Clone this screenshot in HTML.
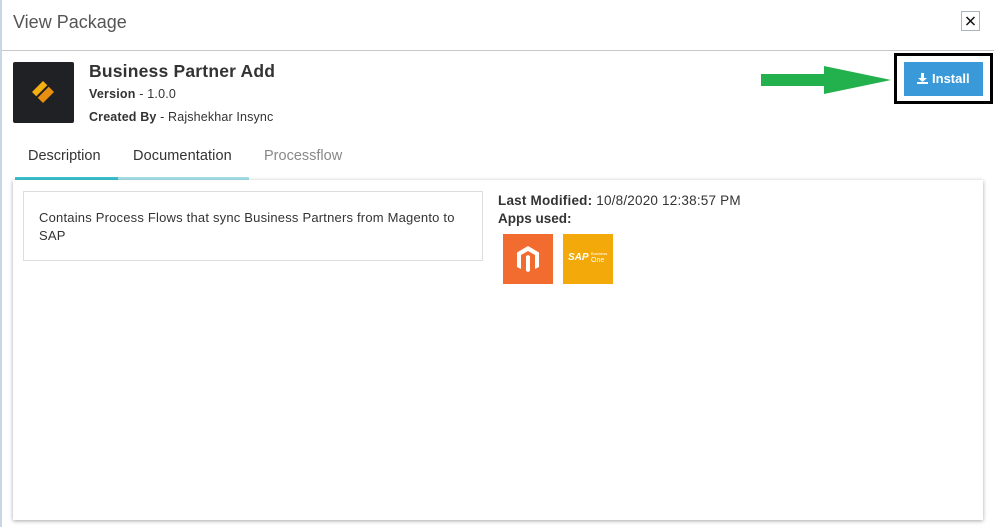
<!DOCTYPE html>
<html><head><style>
body{margin:0;width:994px;height:527px;background:#fff;font-family:"Liberation Sans",sans-serif;position:relative;overflow:hidden;color:#333}
.a{position:absolute;white-space:nowrap}
</style></head><body>
<div class="a" style="left:0;top:0;width:2px;height:527px;background:#c9d6e4"></div>
<div class="a" style="left:13px;top:12px;font-size:18px;color:#555">View Package</div>
<div class="a" style="left:961px;top:11px;width:19px;height:20px;border:1px solid #aab4be;box-sizing:border-box"><svg width="17" height="18"><path d="M4.5 5L12.5 13M12.5 5L4.5 13" stroke="#111" stroke-width="1.5"/></svg></div>
<div class="a" style="left:2px;top:50px;width:992px;height:1px;background:#c8c8c8"></div>
<div class="a" style="left:13px;top:62px;width:61px;height:61px;background:#1f2125;border-radius:2px">
<svg width="61" height="61"><path d="M32 21 L38 27 L27 38 L21 32Z" fill="#f3b00f" transform="translate(-2,-2)"/><path d="M32 21 L38 27 L27 38 L21 32Z" fill="#e88f10" transform="translate(3,3)"/><line x1="23" y1="36" x2="37" y2="22" stroke="#1f2125" stroke-width="2"/></svg></div>
<div class="a" style="left:89px;top:61px;font-size:17.5px;font-weight:bold;color:#333;letter-spacing:0.2px">Business Partner Add</div>
<div class="a" style="left:89px;top:87px;font-size:12.5px;letter-spacing:0.2px"><b>Version</b> - 1.0.0</div>
<div class="a" style="left:89px;top:110px;font-size:12.5px;letter-spacing:0.15px"><b>Created By</b> - Rajshekhar Insync</div>
<svg class="a" style="left:760px;top:64px" width="132" height="32"><rect x="1" y="10" width="65" height="12" fill="#22b14c"/><polygon points="64,2 131,16 64,30" fill="#22b14c"/></svg>
<div class="a" style="left:894px;top:53px;width:99px;height:51px;border:3px solid #000;box-sizing:border-box"></div>
<div class="a" style="left:904px;top:62px;width:79px;height:34px;background:#3a9ad9;color:#fff;font-size:13px;font-weight:bold;line-height:34px;text-align:center">
<svg width="11" height="11" style="vertical-align:-1px"><path d="M4 0h3v5h3l-4.5 4L1 5h3z M0 9h11v2H0z" fill="#fff"/></svg> Install</div>
<div class="a" style="left:28px;top:148px;font-size:14.5px;color:#333">Description</div>
<div class="a" style="left:133px;top:148px;font-size:14.5px;color:#333;letter-spacing:0.1px">Documentation</div>
<div class="a" style="left:264px;top:148px;font-size:14.5px;color:#888">Processflow</div>
<div class="a" style="left:15px;top:177px;width:103px;height:3px;background:#3cc3d0"></div>
<div class="a" style="left:118px;top:177px;width:131px;height:3px;background:#a6e2e9"></div>
<div class="a" style="left:13px;top:180px;width:970px;height:340px;background:#fff;box-shadow:0 1px 4px rgba(0,0,0,.35)"></div>
<div class="a" style="left:23px;top:191px;width:460px;height:70px;border:1px solid #ddd;box-sizing:border-box;padding:17px 15px;font-size:13px;line-height:18px;color:#333;white-space:normal"><div style="width:425px;letter-spacing:0.2px">Contains Process Flows that sync Business Partners from Magento to SAP</div></div>
<div class="a" style="left:498px;top:193px;font-size:13.5px;letter-spacing:0.2px"><b>Last Modified:</b> 10/8/2020 12:38:57 PM</div>
<div class="a" style="left:498px;top:211px;font-size:13.5px;font-weight:bold">Apps used:</div>
<div class="a" style="left:503px;top:234px;width:50px;height:50px;background:#f26b2f">
<svg width="50" height="50"><path d="M25 12 L36 18.5 V33 L32 35 V21 L25 17 L18 21 V35 L14 33 V18.5Z M23 22 L25 21 L27 22 V37 L25 38 L23 37Z" fill="#fff"/></svg></div>
<div class="a" style="left:563px;top:234px;width:50px;height:50px;background:#f3a90a;color:#fff">
<span class="a" style="left:5px;top:18px;font-size:10px;font-weight:bold;font-style:italic">SAP</span><span class="a" style="left:28px;top:17px;font-size:4px">Business</span><span class="a" style="left:28px;top:23px;font-size:7px">One</span></div>
</body></html>
